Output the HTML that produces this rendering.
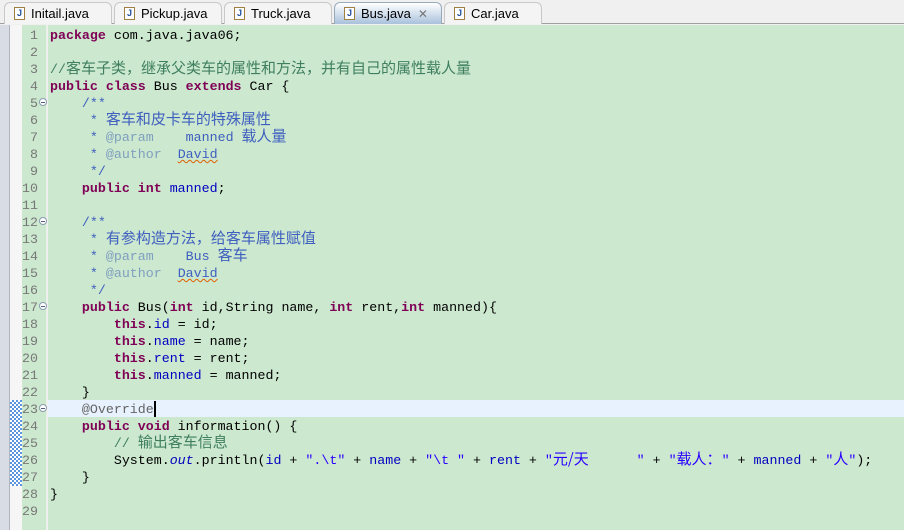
<!DOCTYPE html>
<html><head><meta charset="utf-8"><style>
*{margin:0;padding:0;box-sizing:border-box}
body{width:904px;height:530px;overflow:hidden;background:#f0f0f0;font-family:"Liberation Sans","Noto Sans CJK SC",sans-serif;position:relative}
.tabs{position:absolute;left:0;top:0;width:904px;height:24px;background:#f0f0f0;border-bottom:1px solid #a0a0a0}
.tab{position:absolute;top:2px;height:22px;border:1px solid #c8c8c8;border-bottom:none;border-radius:6px 6px 0 0;background:#f4f4f4;font-size:13px;color:#000;padding:3px 0 0 26px}
.tab .ic{position:absolute;left:9px;top:4px;width:11px;height:13px;border:1px solid #a08040;background:#fff;font:bold 9px "Liberation Sans";color:#2050a0;text-align:center;line-height:11px}
.tab.act{background:linear-gradient(#ffffff,#a9c1dc);border-color:#9ab}
.side{position:absolute;left:0;top:25px;width:10px;height:505px;background:#d8dce4;border-right:1px solid #b0b4bc}
.ruler{position:absolute;left:10px;top:25px;width:12px;height:505px;background:#f6f6f6}
.mark{position:absolute;left:10px;top:400px;width:12px;height:86px;background-color:#fff;background-image:linear-gradient(45deg,#5b95e0 25%,transparent 25%,transparent 75%,#5b95e0 75%),linear-gradient(45deg,#5b95e0 25%,transparent 25%,transparent 75%,#5b95e0 75%);background-size:4px 4px;background-position:0 0,2px 2px}
.gut{position:absolute;left:22px;top:25px;width:25px;height:505px;background:#cce8cf;border-right:1px solid #e8f0e8}
.ed{position:absolute;left:48px;top:25px;width:856px;height:505px;background:#cce8cf}
.hl{position:absolute;left:48px;top:400px;width:856px;height:17px;background:#e8f2fe}
.ln,.code{position:absolute;top:27px;font:13.3px "Liberation Mono","Noto Sans CJK SC",monospace}
.ln div,.code div{height:17px;line-height:17px;overflow:visible;white-space:pre}
.ln{left:20px;width:18px;text-align:right;color:#787878}
.code{left:50px;color:#000}
.k{color:#7f0055;font-weight:bold}
.c{color:#3f7f5f}
.d{color:#3f5fbf}
.t{color:#7f9fbf}
.s{color:#2a00ff}
.f{color:#0000c0}
.o{color:#0000c0;font-style:italic}
.a{color:#646464}
.z{font-size:15px;line-height:1px;font-family:"Noto Sans CJK SC",sans-serif}
.u{text-decoration:underline wavy #e06000;text-decoration-thickness:1px}
.fold{position:absolute;left:39px;width:8px;height:8px;border:1px solid #8a9ab0;border-radius:50%;background:#fff}
.fold:after{content:"";position:absolute;left:1px;top:3px;width:4px;height:1px;background:#506080}
.cur{position:absolute;left:154px;top:401px;width:2px;height:16px;background:#000}
</style></head><body>
<div class="tabs">
<div class="tab" style="left:4px;width:108px"><span class="ic">J</span>Initail.java</div>
<div class="tab" style="left:114px;width:108px"><span class="ic">J</span>Pickup.java</div>
<div class="tab" style="left:224px;width:108px"><span class="ic">J</span>Truck.java</div>
<div class="tab act" style="left:334px;width:108px"><span class="ic">J</span>Bus.java <span style="color:#777;font-size:12px">&nbsp;✕</span></div>
<div class="tab" style="left:444px;width:98px"><span class="ic">J</span>Car.java</div>
</div>
<div class="side"></div><div class="ruler"></div><div class="mark"></div>
<div class="gut"></div><div class="ed"></div><div class="hl"></div>
<div class="fold" style="top:98px"></div><div class="fold" style="top:217px"></div><div class="fold" style="top:302px"></div><div class="fold" style="top:404px"></div>
<div class="ln"><div>1</div><div>2</div><div>3</div><div>4</div><div>5</div><div>6</div><div>7</div><div>8</div><div>9</div><div>10</div><div>11</div><div>12</div><div>13</div><div>14</div><div>15</div><div>16</div><div>17</div><div>18</div><div>19</div><div>20</div><div>21</div><div>22</div><div>23</div><div>24</div><div>25</div><div>26</div><div>27</div><div>28</div><div>29</div></div>
<div class="code">
<div><span class="k">package</span> com.java.java06;</div>
<div></div>
<div><span class="c">//<span class="z">客车子类，继承父类车的属性和方法，并有自己的属性载人量</span></span></div>
<div><span class="k">public class</span> Bus <span class="k">extends</span> Car {</div>
<div>    <span class="d">/**</span></div>
<div><span class="d">     * <span class="z">客车和皮卡车的特殊属性</span></span></div>
<div><span class="d">     * <span class="t">@param</span>    manned <span class="z">载人量</span></span></div>
<div><span class="d">     * <span class="t">@author</span>  <span class="u">David</span></span></div>
<div><span class="d">     */</span></div>
<div>    <span class="k">public int</span> <span class="f">manned</span>;</div>
<div></div>
<div>    <span class="d">/**</span></div>
<div><span class="d">     * <span class="z">有参构造方法，给客车属性赋值</span></span></div>
<div><span class="d">     * <span class="t">@param</span>    Bus <span class="z">客车</span></span></div>
<div><span class="d">     * <span class="t">@author</span>  <span class="u">David</span></span></div>
<div><span class="d">     */</span></div>
<div>    <span class="k">public</span> Bus(<span class="k">int</span> id,String name, <span class="k">int</span> rent,<span class="k">int</span> manned){</div>
<div>        <span class="k">this</span>.<span class="f">id</span> = id;</div>
<div>        <span class="k">this</span>.<span class="f">name</span> = name;</div>
<div>        <span class="k">this</span>.<span class="f">rent</span> = rent;</div>
<div>        <span class="k">this</span>.<span class="f">manned</span> = manned;</div>
<div>    }</div>
<div>    <span class="a">@Override</span></div>
<div>    <span class="k">public void</span> information() {</div>
<div>        <span class="c">// <span class="z">输出客车信息</span></span></div>
<div>        System.<span class="o">out</span>.println(<span class="f">id</span> + <span class="s">".\t"</span> + <span class="f">name</span> + <span class="s">"\t "</span> + <span class="f">rent</span> + <span class="s">"<span class="z">元/天</span>      "</span> + <span class="s">"<span class="z">载人：</span>"</span> + <span class="f">manned</span> + <span class="s">"<span class="z">人</span>"</span>);</div>
<div>    }</div>
<div>}</div>
<div></div>
</div>
<div class="cur"></div>
</body></html>
